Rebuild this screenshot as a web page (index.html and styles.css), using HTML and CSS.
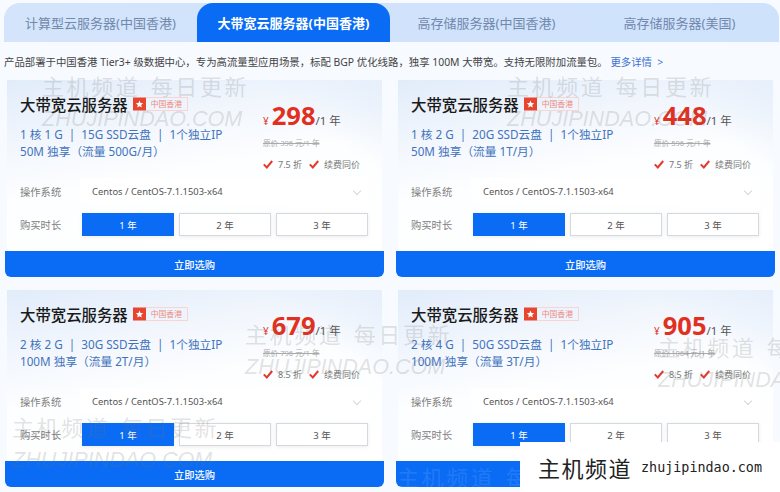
FILE: index.html
```html
<!DOCTYPE html>
<html lang="zh-CN">
<head>
  <meta charset="UTF-8" />
  <meta name="viewport" content="width=device-width, initial-scale=1.0" />
  <title>大带宽云服务器</title>
  <link rel="stylesheet" href="styles.css">
</head>
<body>
  <svg class="icon-defs" width="0" height="0">
    <symbol id="check" viewBox="0 0 10 9"><path d="M.8 4.4 3.8 7.4 9.2 1" fill="none" stroke="#e4392b" stroke-width="2"/></symbol>
    <symbol id="hk" viewBox="0 0 14 14"><rect width="14" height="14" fill="#e8452f"/><path d="M7 3.2 8.1 5.9 11 6.1 8.8 8 9.5 10.8 7 9.3 4.5 10.8 5.2 8 3 6.1 5.9 5.9Z" fill="#fff"/></symbol>
  </svg>

  <div class="tabs">
    <div class="tab">计算型云服务器(中国香港)</div>
    <div class="tab active">大带宽云服务器(中国香港)</div>
    <div class="tab">高存储服务器(中国香港)</div>
    <div class="tab">高存储服务器(美国)</div>
  </div>

  <div class="desc">产品部署于中国香港 Tier3+ 级数据中心，专为高流量型应用场景，标配 BGP 优化线路，独享 100M 大带宽。支持无限附加流量包。 <span class="more">更多详情 &nbsp;&gt;</span></div>

  <div class="grid">
    <div class="card">
      <div class="body">
        <div class="head">
          <div class="info">
            <div class="title-row"><span class="title">大带宽云服务器</span><svg class="flag"><use href="#hk"/></svg><span class="region">中国香港</span></div>
            <div class="spec">1 核 1 G &nbsp;|&nbsp; 15G SSD云盘 &nbsp;|&nbsp; 1个独立IP</div>
            <div class="spec">50M 独享（流量 500G/月）</div>
          </div>
          <div class="price-box">
            <div class="price"><span class="yen">¥</span><span class="num">298</span><span class="unit">/1 年</span></div>
            <div class="old">原价 396 元/1 年</div>
            <div class="perks"><svg class="check"><use href="#check"/></svg><span class="perk">7.5 折</span><svg class="check"><use href="#check"/></svg><span class="perk">续费同价</span></div>
          </div>
        </div>
        <div class="row"><span class="label">操作系统</span><div class="select">Centos / CentOS-7.1.1503-x64<span class="chev"></span></div></div>
        <div class="row term"><span class="label">购买时长</span><div class="years"><div class="year on">1 年</div><div class="year">2 年</div><div class="year">3 年</div></div></div>
      </div>
      <div class="buy">立即选购</div>
    </div>

    <div class="card">
      <div class="body">
        <div class="head">
          <div class="info">
            <div class="title-row"><span class="title">大带宽云服务器</span><svg class="flag"><use href="#hk"/></svg><span class="region">中国香港</span></div>
            <div class="spec">1 核 2 G &nbsp;|&nbsp; 20G SSD云盘 &nbsp;|&nbsp; 1个独立IP</div>
            <div class="spec">50M 独享（流量 1T/月）</div>
          </div>
          <div class="price-box">
            <div class="price"><span class="yen">¥</span><span class="num">448</span><span class="unit">/1 年</span></div>
            <div class="old">原价 596 元/1 年</div>
            <div class="perks"><svg class="check"><use href="#check"/></svg><span class="perk">7.5 折</span><svg class="check"><use href="#check"/></svg><span class="perk">续费同价</span></div>
          </div>
        </div>
        <div class="row"><span class="label">操作系统</span><div class="select">Centos / CentOS-7.1.1503-x64<span class="chev"></span></div></div>
        <div class="row term"><span class="label">购买时长</span><div class="years"><div class="year on">1 年</div><div class="year">2 年</div><div class="year">3 年</div></div></div>
      </div>
      <div class="buy">立即选购</div>
    </div>

    <div class="card">
      <div class="body">
        <div class="head">
          <div class="info">
            <div class="title-row"><span class="title">大带宽云服务器</span><svg class="flag"><use href="#hk"/></svg><span class="region">中国香港</span></div>
            <div class="spec">2 核 2 G &nbsp;|&nbsp; 30G SSD云盘 &nbsp;|&nbsp; 1个独立IP</div>
            <div class="spec">100M 独享（流量 2T/月）</div>
          </div>
          <div class="price-box">
            <div class="price"><span class="yen">¥</span><span class="num">679</span><span class="unit">/1 年</span></div>
            <div class="old">原价 796 元/1 年</div>
            <div class="perks"><svg class="check"><use href="#check"/></svg><span class="perk">8.5 折</span><svg class="check"><use href="#check"/></svg><span class="perk">续费同价</span></div>
          </div>
        </div>
        <div class="row"><span class="label">操作系统</span><div class="select">Centos / CentOS-7.1.1503-x64<span class="chev"></span></div></div>
        <div class="row term"><span class="label">购买时长</span><div class="years"><div class="year on">1 年</div><div class="year">2 年</div><div class="year">3 年</div></div></div>
      </div>
      <div class="buy">立即选购</div>
    </div>

    <div class="card">
      <div class="body">
        <div class="head">
          <div class="info">
            <div class="title-row"><span class="title">大带宽云服务器</span><svg class="flag"><use href="#hk"/></svg><span class="region">中国香港</span></div>
            <div class="spec">2 核 4 G &nbsp;|&nbsp; 50G SSD云盘 &nbsp;|&nbsp; 1个独立IP</div>
            <div class="spec">100M 独享（流量 3T/月）</div>
          </div>
          <div class="price-box">
            <div class="price"><span class="yen">¥</span><span class="num">905</span><span class="unit">/1 年</span></div>
            <div class="old">原价 1064 元/1 年</div>
            <div class="perks"><svg class="check"><use href="#check"/></svg><span class="perk">8.5 折</span><svg class="check"><use href="#check"/></svg><span class="perk">续费同价</span></div>
          </div>
        </div>
        <div class="row"><span class="label">操作系统</span><div class="select">Centos / CentOS-7.1.1503-x64<span class="chev"></span></div></div>
        <div class="row term"><span class="label">购买时长</span><div class="years"><div class="year on">1 年</div><div class="year">2 年</div><div class="year">3 年</div></div></div>
      </div>
      <div class="buy">立即选购</div>
    </div>
  </div>

  <!-- watermarks over the page -->
  <div class="wm wm-a"><div class="wm-cn">主机频道 每日更新</div><div class="wm-en">ZHUJIPINDAO.COM</div></div>
  <div class="wm wm-b"><div class="wm-cn">主机频道 每日更新</div><div class="wm-en">ZHUJIPINDAO.COM</div></div>
  <div class="wm wm-c"><div class="wm-cn">主机频道 每日更新</div><div class="wm-en">ZHUJIPINDAO.COM</div></div>
  <div class="wm wm-d"><div class="wm-cn">主机频道 每日更新</div><div class="wm-en">ZHUJIPINDAO.COM</div></div>
  <div class="wm wm-e"><div class="wm-cn">主机频道 每</div><div class="wm-en">ZHUJIPINDA</div></div>
  <div class="wm wm-f"><div class="wm-cn">主机频道 每</div></div>

  <div class="stamp"><span class="stamp-cn">主机频道</span><span class="stamp-en">zhujipindao.com</span></div>
</body>
</html>
```

FILE: styles.css
```css
html, body {
  height: 492px;
  overflow: hidden;
}
body {
  margin: 0;
  position: relative;
  background-color: #f7faff;
  color: #333;
  font-family: "Noto Sans", "Noto Sans CJK SC", sans-serif;
  padding: 3px 0 0 4px;
  box-sizing: border-box;
}
.icon-defs {
  position: absolute;
}

.tabs {
  display: grid;
  grid-template-columns: repeat(4, 193px);
  width: 775px;
  height: 39px;
  background: linear-gradient(90deg, #d3e4fb, #cfe2fc);
  border-radius: 16px 16px 0 0;
}
.tab {
  display: flex;
  align-items: center;
  justify-content: center;
  font-size: 13px;
  color: #7189ad;
}
.tab.active {
  background-color: #0a6cf5;
  color: white;
  font-weight: 700;
  border-radius: 16px 16px 0 0;
}

.desc {
  height: 38px;
  display: flex;
  align-items: center;
  font-size: 10.4px;
  color: #444;
  white-space: pre-wrap;
}
.more {
  color: #3f74d0;
}

.grid {
  display: grid;
  grid-template-columns: repeat(2, 379px);
  grid-auto-rows: 197px;
  column-gap: 12px;
  row-gap: 13px;
  margin-left: 1px;
}
.card {
  display: flex;
  flex-direction: column;
}
.body {
  flex: 1;
  margin: 0 2px;
  padding: 15px 13px 0;
  background:
    linear-gradient(215deg, #e6effb 0%, rgba(240,245,252,0) 22%),
    linear-gradient(170deg, #e1ecfa 0%, #f3f7fd 30%, #fdfeff 52%, #ffffff 100%);
}
.head {
  display: flex;
  height: 83px;
}
.info {
  width: 243px;
}
.title-row {
  display: flex;
  align-items: center;
  height: 18px;
  margin-bottom: 13px;
}
.title {
  font-size: 15.4px;
  font-weight: 500;
  color: #1a1a1a;
}
.flag {
  width: 13px;
  height: 14px;
  margin-left: 5px;
}
.region {
  height: 12px;
  line-height: 12px;
  padding: 0 5px;
  font-size: 7.8px;
  color: #ee8a80;
  border: 1px solid #f8d5d1;
  border-left: none;
}
.spec {
  font-size: 11.7px;
  line-height: 17px;
  color: #4173bd;
  white-space: nowrap;
}

.price {
  display: flex;
  align-items: baseline;
  height: 31px;
  margin-top: 5px;
}
.yen {
  font-size: 10px;
  color: #e1301f;
  margin-right: 3px;
}
.num {
  font-size: 25.5px;
  font-weight: 700;
  line-height: 31px;
  color: #e1301f;
}
.unit {
  font-size: 11.5px;
  color: #555;
}
.old {
  font-size: 7.6px;
  line-height: 12px;
  color: #aaa;
  text-decoration: line-through;
  margin-top: 6px;
}
.perks {
  display: flex;
  align-items: center;
  margin-top: 9px;
}
.check {
  width: 10px;
  height: 9px;
  margin-right: 5px;
}
.perk {
  font-size: 9px;
  color: #777;
  margin-right: 7px;
  white-space: nowrap;
}

.row {
  display: flex;
  align-items: center;
  height: 26px;
}
.term {
  height: 23px;
  margin-top: 9px;
}
.label {
  width: 60px;
  font-size: 10.3px;
  color: #808080;
}
.select {
  width: 289px;
  height: 26px;
  display: flex;
  align-items: center;
  justify-content: space-between;
  box-sizing: border-box;
  padding: 0 9px 0 12px;
  background-color: white;
  font-size: 9.4px;
  color: #555;
}
.chev {
  width: 5px;
  height: 5px;
  border-right: 1px solid #d6d6d6;
  border-bottom: 1px solid #d6d6d6;
  transform: rotate(45deg);
}
.years {
  display: flex;
  gap: 5px;
  margin-left: 2px;
}
.year {
  width: 92px;
  height: 23px;
  box-sizing: border-box;
  display: flex;
  align-items: center;
  justify-content: center;
  background-color: white;
  border: 1px solid #d5d8de;
  box-shadow: 0 1px 4px rgba(0,0,0,0.08);
  font-size: 9.5px;
  color: #555;
}
.year.on {
  background-color: #0a6cf5;
  border-color: #0a6cf5;
  color: white;
}
.buy {
  height: 26px;
  display: flex;
  align-items: center;
  justify-content: center;
  background-color: #0a6cf5;
  border-radius: 0 0 6px 6px;
  color: white;
  font-size: 10.3px;
  font-weight: 500;
}

.wm {
  position: absolute;
  white-space: nowrap;
  color: rgba(110,110,110,0.2);
  pointer-events: none;
}
.wm-cn {
  font-size: 22px;
  line-height: 24px;
  letter-spacing: 2.6px;
  word-spacing: 2px;
}
.wm-en {
  margin-top: 11px;
  font-family: "Liberation Sans", sans-serif;
  font-style: italic;
  font-size: 21.6px;
  line-height: 20px;
}
.wm-a { left: 42px; top: 74px; }
.wm-b { left: 507px; top: 74px; }
.wm-c { left: 245px; top: 322px; }
.wm-d { left: 12px; top: 415px; }
.wm-e { left: 658px; top: 335px; width: 122px; overflow: hidden; }
.wm-f { left: 397px; top: 465px; width: 123px; overflow: hidden; color: rgba(255,255,255,0.1); }

.stamp {
  position: absolute;
  left: 520px;
  top: 442px;
  width: 260px;
  height: 50px;
  background-color: white;
  display: flex;
  align-items: center;
  padding-left: 18px;
  box-sizing: border-box;
  color: #222;
}
.stamp-cn {
  font-size: 22px;
  letter-spacing: 1.5px;
}
.stamp-en {
  margin-left: 9px;
  font-family: "DejaVu Sans Mono", monospace;
  font-size: 13.4px;
}
```
